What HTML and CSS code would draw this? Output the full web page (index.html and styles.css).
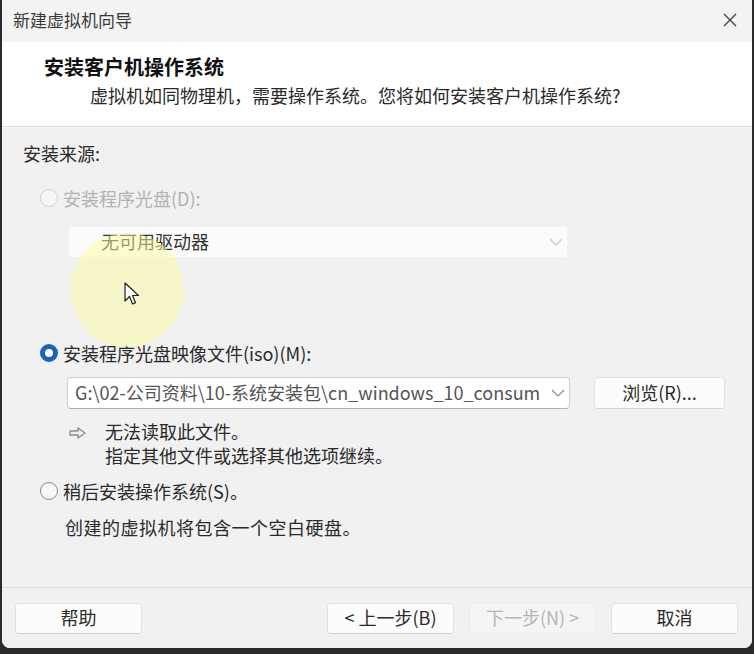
FILE: index.html
```html
<!DOCTYPE html>
<html lang="zh-cn">
<head>
    <meta charset="UTF-8">
    <title>新建虚拟机向导</title>
    <link rel="stylesheet" href="styles.css">
</head>
<body>
<div class="dialog">
    <div class="titleBar">
        <span class="titleText">新建虚拟机向导</span>
        <span class="closeBtn">
            <svg width="16" height="16" viewBox="0 0 16 16"><path d="M2 2L14 14M14 2L2 14" stroke="#444" stroke-width="1.4" fill="none"/></svg>
        </span>
    </div>
    <div class="header">
        <p class="headTitle">安装客户机操作系统</p>
        <p class="headSub">虚拟机如同物理机，需要操作系统。您将如何安装客户机操作系统?</p>
    </div>
    <div class="main">
        <p class="srcLabel">安装来源:</p>

        <div class="radioRow disabled">
            <span class="radio"></span>安装程序光盘(D):
        </div>
        <div class="select disabledSelect">
            <span class="selText">无可用驱动器</span>
            <svg class="chev" width="14" height="8" viewBox="0 0 14 8"><path d="M1 1L7 7L13 1" stroke="#c8c8c8" stroke-width="1.3" fill="none"/></svg>
        </div>

        <div class="radioRow isoRow">
            <span class="radio checked"></span>安装程序光盘映像文件(iso)(M):
        </div>
        <div class="isoLine">
            <div class="select combo">
                <span class="selText">G:\02-公司资料\10-系统安装包\cn_windows_10_consum</span>
                <svg class="chev" width="14" height="8" viewBox="0 0 14 8"><path d="M1 1L7 7L13 1" stroke="#888" stroke-width="1.2" fill="none"/></svg>
            </div>
            <span class="btn browseBtn">浏览(R)...</span>
        </div>
        <div class="note">
            <svg class="noteIcon" width="18" height="12" viewBox="0 0 18 12"><path d="M1 4H9V1L16 6L9 11V8H1Z" stroke="#8a8a8a" stroke-width="1.3" fill="none" stroke-linejoin="round"/></svg>
            <div class="noteText">
                <p>无法读取此文件。</p>
                <p>指定其他文件或选择其他选项继续。</p>
            </div>
        </div>

        <div class="radioRow laterRow">
            <span class="radio"></span>稍后安装操作系统(S)。
        </div>
        <p class="info">创建的虚拟机将包含一个空白硬盘。</p>
    </div>
    <div class="footer">
        <span class="btn">帮助</span>
        <span class="spacer"></span>
        <span class="btn">&lt; 上一步(B)</span>
        <span class="btn off">下一步(N) &gt;</span>
        <span class="btn">取消</span>
    </div>

    <!-- 录屏时的鼠标高亮 -->
    <div class="cursorGlow"></div>
    <svg class="cursor" width="16" height="24" viewBox="0 0 16 24"><path d="M1 1V19L5.5 14.5L8.5 22L11.5 20.8L8.5 13.5H14.5Z" fill="#fff" stroke="#222" stroke-width="1.2" stroke-linejoin="round"/></svg>
</div>
</body>
</html>
```

FILE: styles.css
```css
*{ margin: 0; padding: 0; box-sizing: border-box; }
body{ background: #2a2a2a; font: 18px/1.4 "Noto Sans CJK SC", "Noto Sans", sans-serif; color: #222; }

.dialog{ position: relative; width: 750px; height: 648px; margin-left: 2px; background: #f1f1f1; border-radius: 0 0 8px 8px; overflow: hidden; display: flex; flex-direction: column; }

.titleBar{ height: 42px; background: #f3f3f3; display: flex; align-items: center; justify-content: space-between; padding: 0 14px 2px 11px; }
.titleBar .titleText{ font-size: 17px; color: #3a3a3a; }
.titleBar .closeBtn{ display: flex; }

.header{ height: 85px; background: #fff; padding: 11px 0 0 42px; border-bottom: 1px solid #dcdcdc; }
.header .headTitle{ font-size: 20px; font-weight: bold; color: #111; line-height: 28px; }
.header .headSub{ font-size: 18px; color: #2a2a2a; padding-left: 46px; margin-top: 2px; line-height: 24px; }

.main{ flex: 1; padding: 13px 0 0 21px; border-top: 1px solid #fafafa; }
.main .srcLabel{ color: #2a2a2a; line-height: 24px; }

.radioRow{ display: flex; align-items: center; color: #2a2a2a; line-height: 24px; margin-left: 17px; }
.radioRow .radio{ width: 18px; height: 18px; border-radius: 50%; border: 1px solid #8a8a8a; background: #f8f8f8; margin-right: 5px; flex: none; }
.radioRow .radio.checked{ border: 5px solid #1a63b8; background: #fff; }
.radioRow.disabled{ color: #b2b2b2; margin-top: 21px; }
.radioRow.disabled .radio{ border-color: #d2d2d2; background: #f6f6f6; }

.select{ display: flex; align-items: center; justify-content: space-between; background: #fff; }
.select .selText{ white-space: nowrap; overflow: hidden; flex: 1; }
.select .chev{ flex: none; margin: 0 4px 0 8px; }
.disabledSelect{ width: 498px; height: 30px; margin: 17px 0 0 46px; background: #fbfbfb; padding-left: 32px; color: #333; }

.isoRow{ margin-top: 84px; }
.isoLine{ display: flex; align-items: center; margin: 12px 0 0 44px; }
.combo{ width: 503px; height: 32px; border: 1px solid #cfcfcf; border-bottom-color: #b0b0b0; border-radius: 4px; padding-left: 7px; color: #555; }
.btn{ display: flex; align-items: center; justify-content: center; width: 127px; height: 31px; background: #fcfcfc; border: 1px solid #e2e2e2; border-bottom-color: #d2d2d2; border-radius: 4px; font-size: 18px; color: #2a2a2a; }
.browseBtn{ width: 131px; height: 32px; margin-left: 24px; }

.note{ display: flex; margin: 10px 0 0 46px; }
.note .noteIcon{ margin-top: 8px; flex: none; }
.note .noteText{ margin-left: 18px; color: #2a2a2a; line-height: 24px; }

.laterRow{ margin-top: 12px; }
.info{ margin: 12px 0 0 42px; color: #2a2a2a; line-height: 24px; letter-spacing: 0.5px; }

.footer{ height: 61px; border-top: 1px solid #dcdcdc; display: flex; align-items: center; padding: 0 14px 0 13px; gap: 17px; background: #f1f1f1; }
.footer .spacer{ flex: 1; }
.footer .btn.off{ color: #b4b4b4; background: #f5f5f5; border-color: #ececec; margin-left: -2px; margin-right: -2px; }

.cursorGlow{ position: absolute; left: 68px; top: 233px; width: 114px; height: 114px; border-radius: 50%; background: rgba(252, 252, 160, 0.5); pointer-events: none; }
.cursor{ position: absolute; left: 122px; top: 282px; }
```
